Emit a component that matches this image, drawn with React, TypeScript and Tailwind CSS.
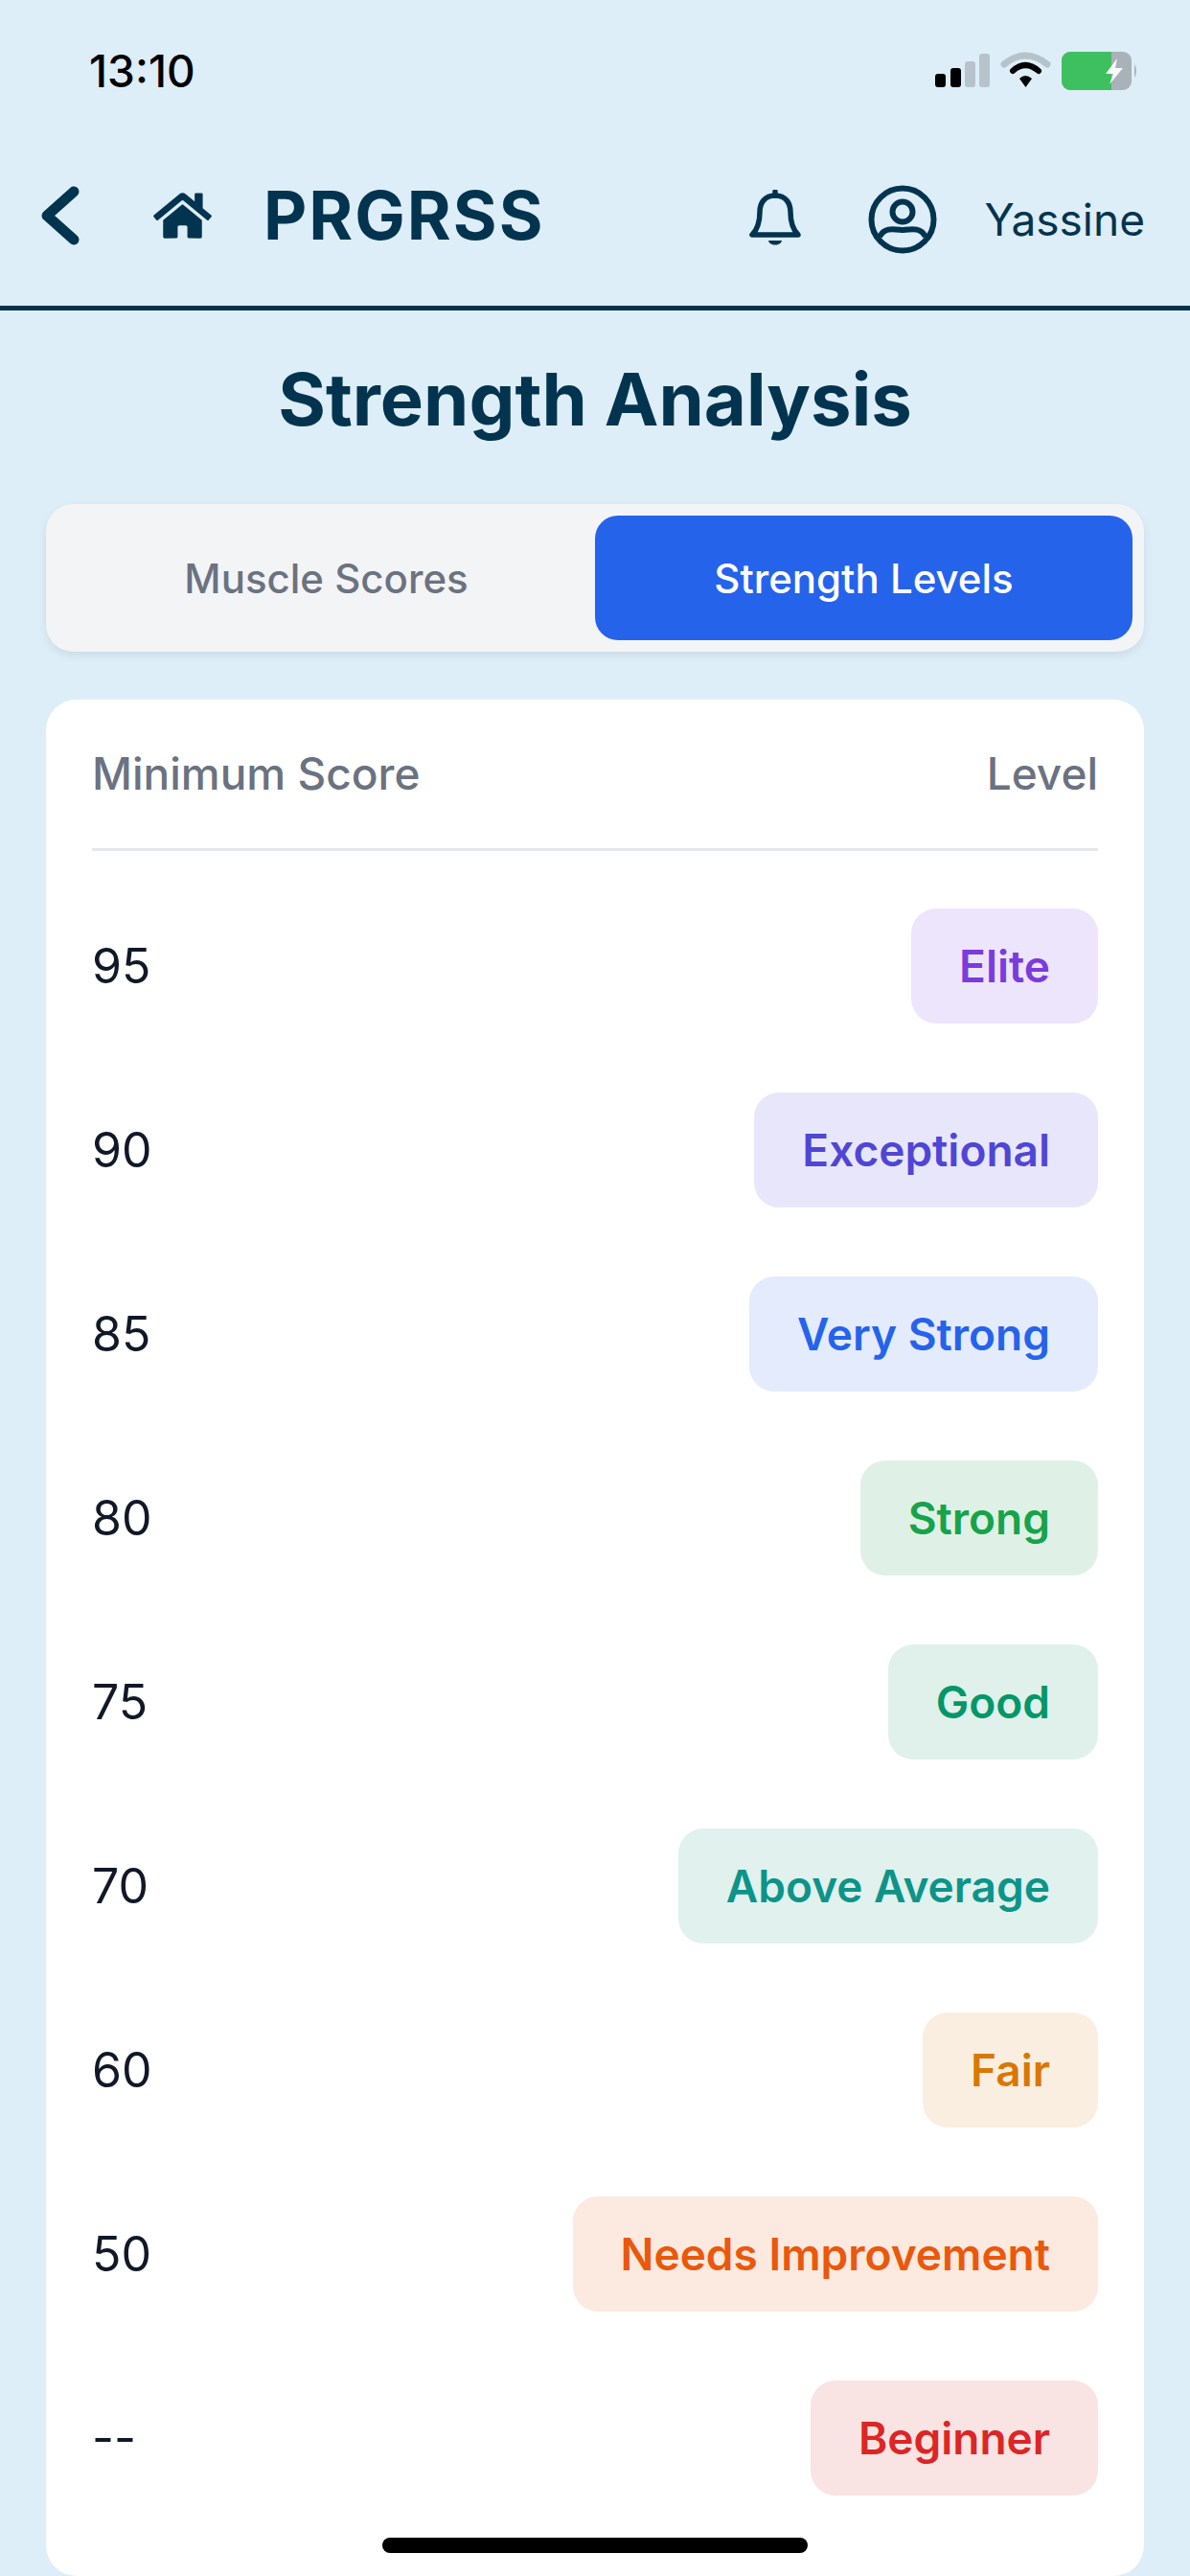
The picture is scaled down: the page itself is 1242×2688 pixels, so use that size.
import { FaHome } from 'react-icons/fa'

const levels = [
  { score: '95', label: 'Elite', badge: 'bg-[#ede5fb] text-[#7c3bdc]' },
  { score: '90', label: 'Exceptional', badge: 'bg-[#e8e6fb] text-[#4f46d5]' },
  { score: '85', label: 'Very Strong', badge: 'bg-[#e3ebfc] text-[#2563eb]' },
  { score: '80', label: 'Strong', badge: 'bg-[#dff1e6] text-[#17a34a]' },
  { score: '75', label: 'Good', badge: 'bg-[#dff1ea] text-[#059669]' },
  { score: '70', label: 'Above Average', badge: 'bg-[#e0f1ee] text-[#0d9488]' },
  { score: '60', label: 'Fair', badge: 'bg-[#f9eedf] text-[#d97706]' },
  { score: '50', label: 'Needs Improvement', badge: 'bg-[#fce9df] text-[#ea580c]' },
  { score: '--', label: 'Beginner', badge: 'bg-[#f9e3e3] text-[#dc2626]' },
]

function StatusIcons() {
  return (
    <svg width="216" height="44" viewBox="0 0 216 44" className="block">
      <rect x="0" y="23" width="11" height="14" rx="3" fill="#000" />
      <rect x="16" y="17" width="11" height="20" rx="3" fill="#000" />
      <rect x="31" y="10" width="11" height="27" rx="3" fill="#b7c3ca" />
      <rect x="46" y="2" width="11" height="35" rx="3" fill="#b7c3ca" />
      <path d="M72 13 Q94 -5 117 13" stroke="#b7c3ca" strokeWidth="7" fill="none" strokeLinecap="round" />
      <path d="M81 20 Q94 8 108 20" stroke="#000" strokeWidth="6" fill="none" strokeLinecap="round" />
      <path d="M88 28 Q94 22 101 28 L94.500 37 Z" fill="#000" />
      <rect x="132" y="0" width="73" height="40" rx="9" fill="#a9b2b8" />
      <path d="M141 0 H184 V40 H141 A9 9 0 0 1 132 31 V9 A9 9 0 0 1 141 0 Z" fill="#3fc060" />
      <path d="M190 7 L178 23 H186 L182 34 L196 17 H188 Z" fill="#fff" opacity="0.95" />
      <path d="M208 13 Q212 20 208 27 Z" fill="#a9b2b8" />
    </svg>
  )
}

function BellIcon() {
  return (
    <svg width="54" height="62" viewBox="0 0 54 62" fill="none" stroke="#03344f" strokeWidth="5.500" strokeLinecap="round" strokeLinejoin="round">
      <path d="M27 6 C16 6 11 14 11 23 C11 34 9 41 3 47 H51 C45 41 43 34 43 23 C43 14 38 6 27 6 Z" />
      <path d="M27 2 V6" />
      <path d="M20 53 H34 C33 59 21 59 20 53 Z" fill="#03344f" stroke="none" />
    </svg>
  )
}

function ProfileIcon() {
  return (
    <svg width="72" height="72" viewBox="0 0 72 72" fill="none" stroke="#03344f" strokeWidth="6">
      <circle cx="36" cy="36" r="32.500" />
      <circle cx="36" cy="28" r="10.500" />
      <path d="M12 54 C17 44 26 46 36 47 C46 46 55 44 60 54" />
    </svg>
  )
}

export default function App() {
  return (
    <div className="relative h-[2688px] w-[1242px] overflow-hidden bg-[#ddeef8] font-['Inter',sans-serif]">
      {/* Status bar */}
      <div className="flex h-[132px] items-start justify-between pl-[93px] pr-[50px] pt-[51px]">
        <span className="text-[46px] font-medium leading-[46px] text-black">13:10</span>
        <div className="pt-[3px]">
          <StatusIcons />
        </div>
      </div>

      {/* Header */}
      <header className="flex h-[192px] items-start justify-between border-b-[5px] border-[#03344f] pl-[43px] pr-[47px]">
        <div className="flex items-center pt-[58px]">
          <svg width="40" height="62" viewBox="0 0 40 62" fill="none" stroke="#03344f" strokeWidth="11" strokeLinecap="round" strokeLinejoin="round">
            <path d="M34 6 L6 31 L34 56" />
          </svg>
          <FaHome className="ml-[73px] h-[54px] w-[69px] text-[#03344f]" />
          <span className="ml-[50px] text-[70px] font-bold leading-[70px] tracking-[2px] text-[#03344f]">PRGRSS</span>
        </div>
        <div className="flex items-center pt-[61px]">
          <BellIcon />
          <div className="ml-[70px]">
            <ProfileIcon />
          </div>
          <span className="ml-[50px] text-[46px] leading-[72px] text-[#03344f]">Yassine</span>
        </div>
      </header>

      {/* Content */}
      <main className="px-[48px]">
        <h1 className="mt-[46px] text-center text-[76px] font-bold leading-[92px] text-[#03344f]">Strength Analysis</h1>

        <div className="mt-[64px] flex h-[154px] rounded-[28px] bg-[#f3f4f6] p-[12px] shadow-[0_4px_10px_rgba(0,0,0,0.08)]">
          <button className="flex-1 text-[42px] font-medium text-[#6b7280]">Muscle Scores</button>
          <button className="flex-1 rounded-[24px] bg-[#2563eb] text-[42px] font-medium text-white">Strength Levels</button>
        </div>

        <section className="mt-[50px] rounded-[32px] bg-white px-[48px] pb-[84px]">
          <div className="flex h-[158px] items-center justify-between border-b-[3px] border-[#e5e7eb] text-[46px] font-medium text-[#6b7280]">
            <span>Minimum Score</span>
            <span>Level</span>
          </div>
          <div className="mt-[60px] flex flex-col gap-[72px]">
            {levels.map((level) => (
              <div key={level.label} className="flex h-[120px] items-center justify-between">
                <span className="text-[50px] text-[#111827]">{level.score}</span>
                <span className={`flex h-[120px] items-center rounded-[26px] px-[50px] text-[46px] font-semibold ${level.badge}`}>
                  {level.label}
                </span>
              </div>
            ))}
          </div>
        </section>
      </main>

      {/* Home indicator */}
      <div className="absolute bottom-[24px] left-[399px] h-[16px] w-[444px] rounded-full bg-black" />
    </div>
  )
}
